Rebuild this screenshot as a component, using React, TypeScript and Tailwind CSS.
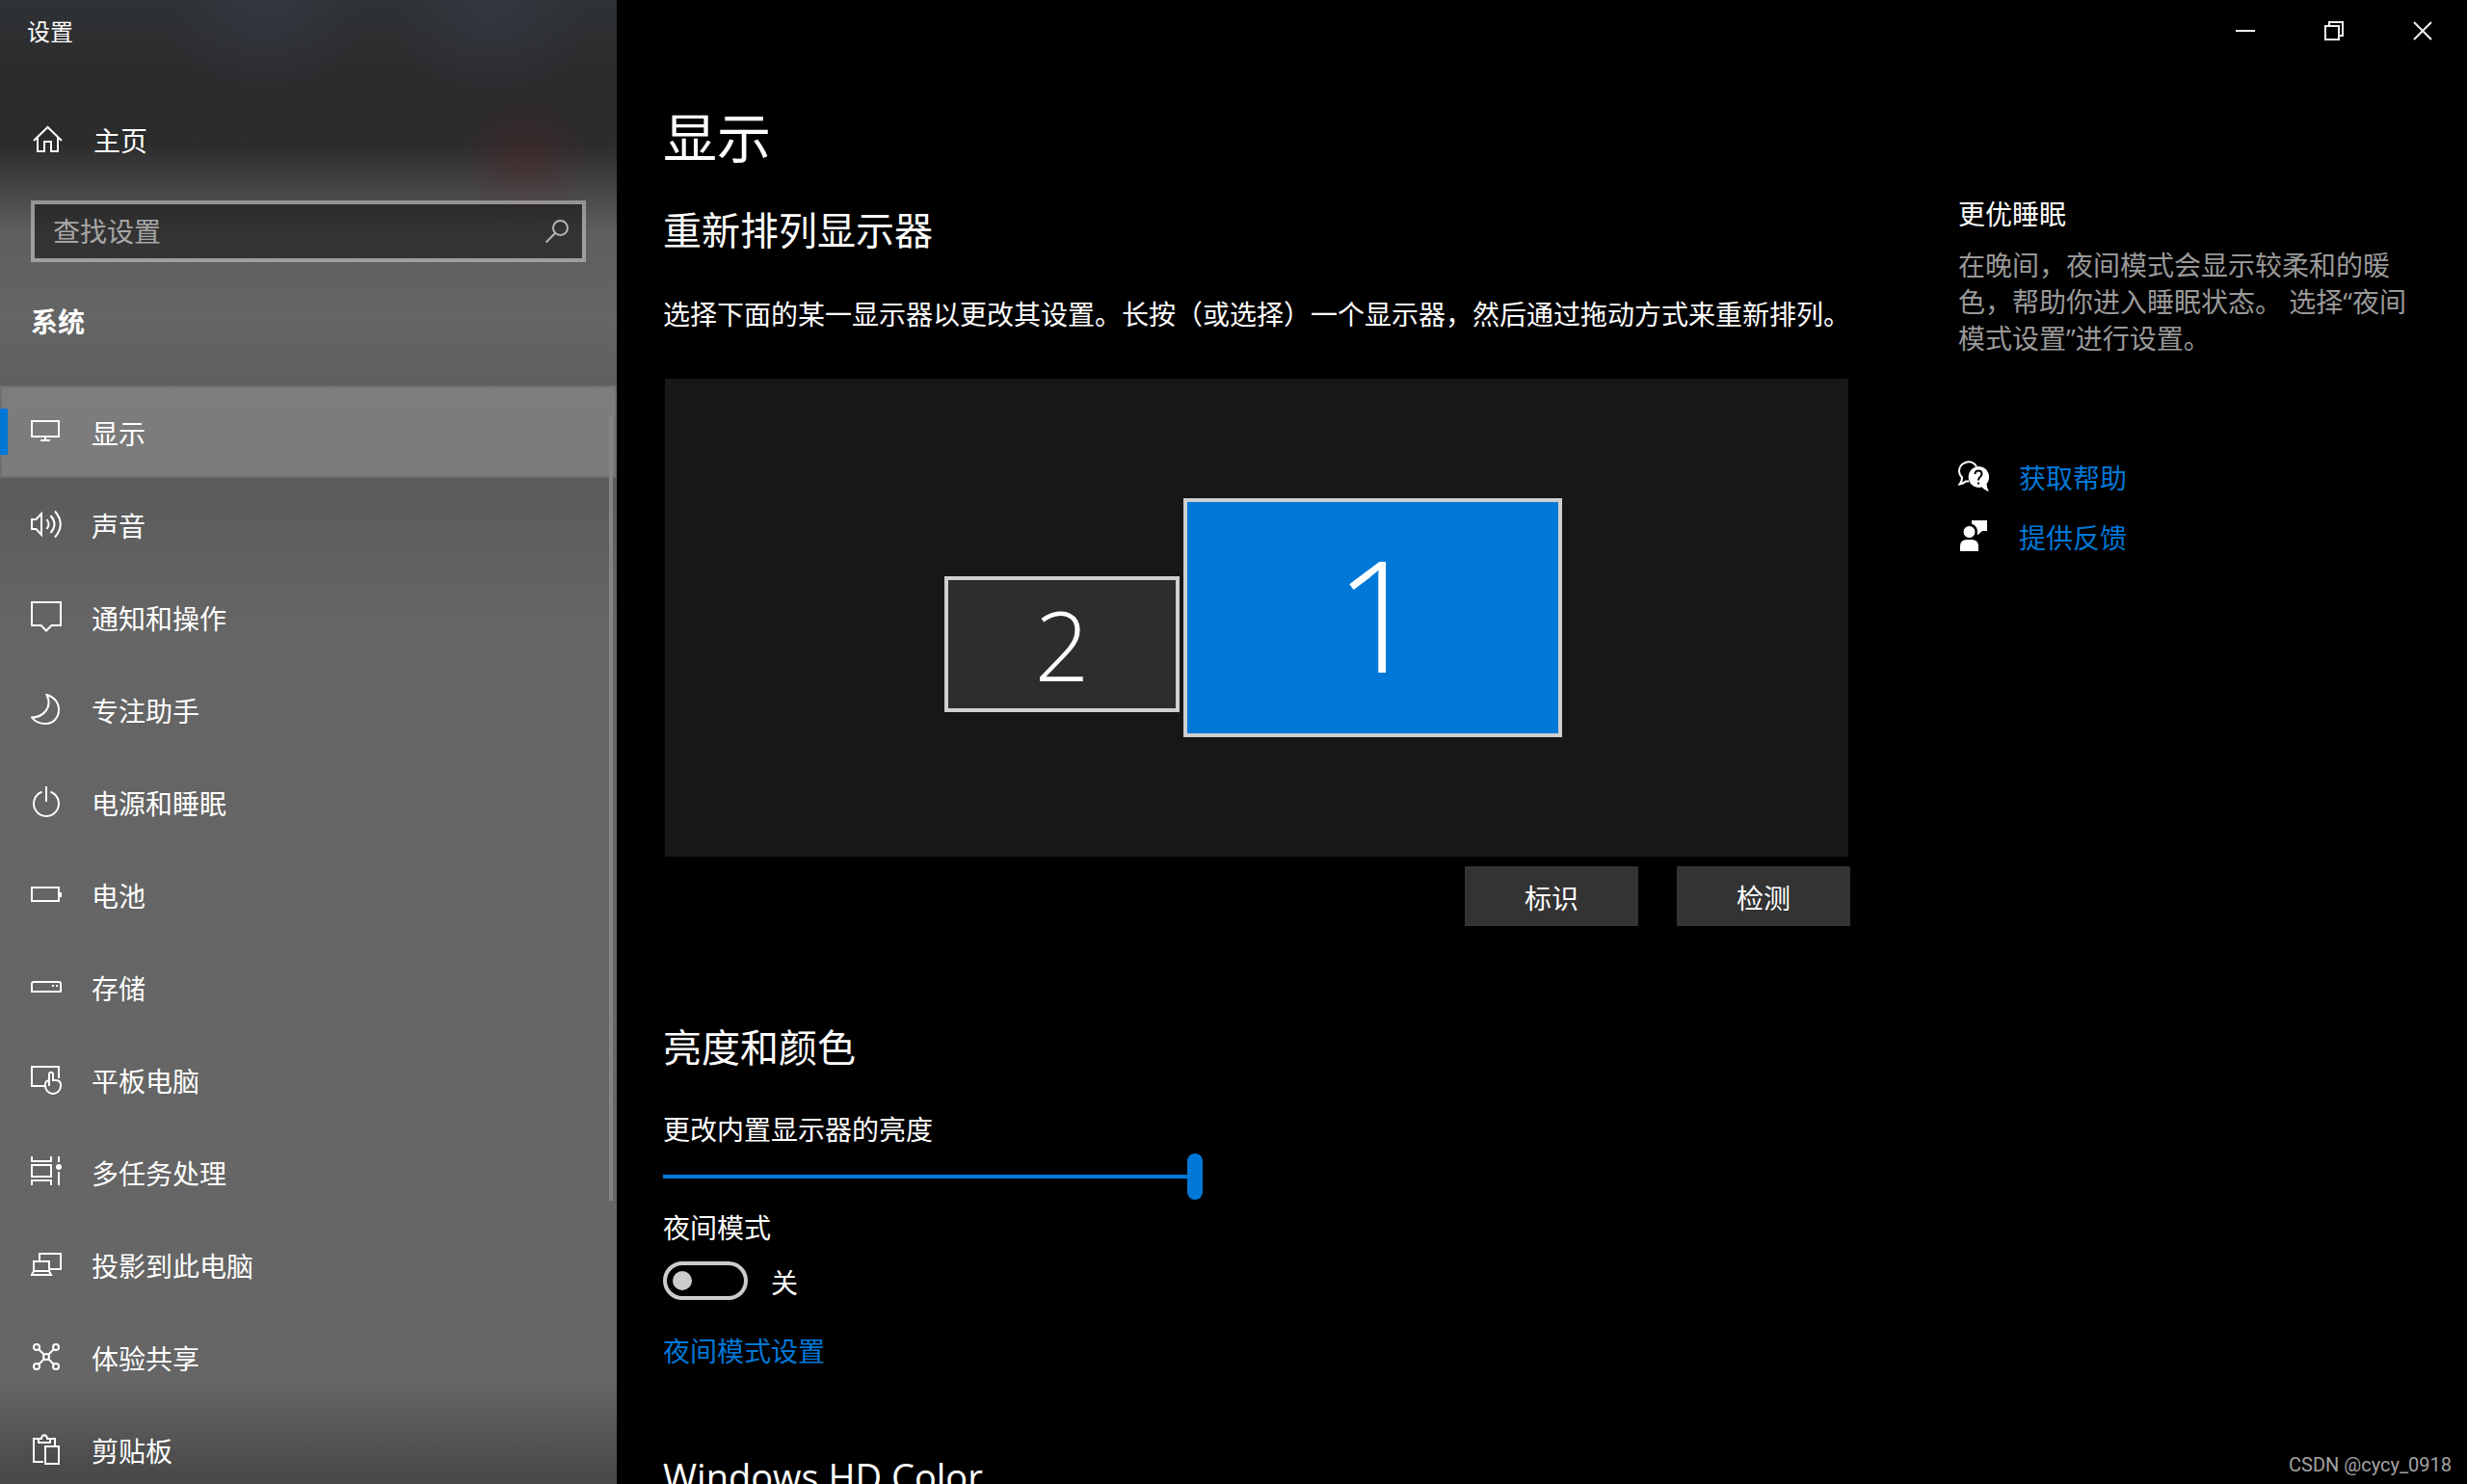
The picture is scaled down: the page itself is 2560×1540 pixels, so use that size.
import { useState } from "react";
import type { ReactNode } from "react";

type NavItem = {
  label: string;
  icon: ReactNode;
};

const NAV_ITEMS: NavItem[] = [
  {
    label: "显示",
    icon: (
      <>
        <rect x="1" y="5" width="28" height="16" />
        <path d="M15 22v3M10 25h10" />
      </>
    ),
  },
  {
    label: "声音",
    icon: (
      <>
        <path d="M1 11h4.5L11 5v22l-5.5-6H1z" />
        <path d="M16.5 11q4 5 0 10M20.5 7q8 9 0 18M25 2.5q11.5 13.5 0 27" />
      </>
    ),
  },
  {
    label: "通知和操作",
    icon: <path d="M1 1h30v24h-9.5L16 30.500l-5.500-5.500H1z" />,
  },
  {
    label: "专注助手",
    icon: (
      <path d="M16.500 1C24 3 29 9 29 16.500C29 25 23 31 15 31C9 31 4 28.500 1 24.500C12 24.500 23 15 16.500 1z" />
    ),
  },
  {
    label: "电源和睡眠",
    icon: <path d="M16 0v16M11.500 5.800A13 13 0 1 0 20.500 5.800" />,
  },
  {
    label: "电池",
    icon: (
      <>
        <rect x="1" y="9" width="28" height="14" />
        <path d="M31 14v5" />
      </>
    ),
  },
  {
    label: "存储",
    icon: (
      <>
        <path d="M1 21v-8q0-2 2-2h26q2 0 2 2v8z" />
        <path d="M22 15h2M26 15h2" />
      </>
    ),
  },
  {
    label: "平板电脑",
    icon: (
      <>
        <path d="M14 23H1V3h28v12" />
        <path d="M19 23V11c0-3 4-3 4 0v6h3q5 0 5 5v1a8 8 0 0 1-16 0v-2q0-3 4-4" />
      </>
    ),
  },
  {
    label: "多任务处理",
    icon: (
      <>
        <path d="M1 0v5h20V0M1 30v-5h20v5M29 0v6M29 16v14" />
        <rect x="1" y="9" width="20" height="12" />
        <circle cx="29" cy="11" r="3" fill="currentColor" stroke="none" />
      </>
    ),
  },
  {
    label: "投影到此电脑",
    icon: (
      <>
        <path d="M9 12V5h22v16H20" />
        <path d="M3 23V13h16v10M3 23h16l2 4H1z" />
      </>
    ),
  },
  {
    label: "体验共享",
    icon: (
      <>
        <circle cx="6" cy="6" r="3" />
        <circle cx="26" cy="6" r="3" />
        <circle cx="6" cy="26" r="3" />
        <circle cx="26" cy="26" r="3" />
        <circle cx="16" cy="16" r="3" />
        <path d="M8 8l6 6M24 8l-6 6M8 24l6-6M24 24l-6-6" />
      </>
    ),
  },
  {
    label: "剪贴板",
    icon: (
      <>
        <path d="M13 29H3V5h5M20 5h5v7" />
        <path d="M8 5v4h12V5h-3c-.5-5-5.500-5-6 0z" />
        <rect x="15" y="13" width="14" height="18" />
      </>
    ),
  },
];

function Icon({ children }: { children: ReactNode }) {
  return (
    <svg
      viewBox="0 0 32 32"
      className="size-8 shrink-0"
      fill="none"
      stroke="currentColor"
      strokeWidth="2"
      aria-hidden="true"
    >
      {children}
    </svg>
  );
}

function Sidebar() {
  const [active, setActive] = useState("显示");

  return (
    <aside className="flex w-[640px] shrink-0 flex-col overflow-hidden bg-[radial-gradient(circle_at_545px_165px,rgba(90,30,35,0.3),transparent_70px),radial-gradient(circle_at_275px_10px,rgba(60,65,85,0.35),transparent_100px),radial-gradient(circle_at_510px_15px,rgba(60,65,85,0.35),transparent_100px),linear-gradient(to_bottom,#2f3235_0px,#2a2a2b_90px,#2c2c2c_150px,#484848_200px,#5e5e5e_240px,#656565_330px,#5f5f5f_400px,#5c5c5c_520px,#656565_640px,#666666_1430px,#494949_1530px)]">
      <div className="flex h-16 shrink-0 items-center px-7 pt-0.5 text-2xl">设置</div>

      <a
        href="#home"
        className="mt-[42px] flex h-20 shrink-0 items-center gap-[31px] pl-[34px]"
      >
        <Icon>
          <path d="M1 16L15.500 2L30 16M5 13v14h7V17h7v10h7V13" />
        </Icon>
        主页
      </a>

      <label className="mx-8 mt-[22px] flex h-16 shrink-0 items-center border-4 border-white/40 bg-black/45 bg-clip-padding pr-3.5 pl-[19px]">
        <input
          type="search"
          aria-label="查找设置"
          placeholder="查找设置"
          className="min-w-0 flex-1 bg-transparent outline-none placeholder:text-[#a6a6a6]"
        />
        <svg
          viewBox="0 0 24 24"
          className="size-6 text-[#b4b4b4]"
          fill="none"
          stroke="currentColor"
          strokeWidth="2"
          aria-hidden="true"
        >
          <circle cx="15.500" cy="8.500" r="7.500" />
          <path d="M10 14L.7 23.500" />
        </svg>
      </label>

      <h2 className="mt-[42px] px-8 leading-10 font-bold">系统</h2>

      <nav className="relative mt-[46px]">
        {NAV_ITEMS.map((item) => (
          <button
            key={item.label}
            type="button"
            onClick={() => setActive(item.label)}
            className={
              item.label === active
                ? "relative flex h-24 w-full items-center gap-[31px] bg-white/19 pl-8 shadow-[inset_0_0_0_2px_rgba(0,0,0,0.1)] before:absolute before:left-0 before:h-12 before:w-2 before:bg-[#0078d7]"
                : "flex h-24 w-full items-center gap-[31px] pl-8"
            }
          >
            <Icon>{item.icon}</Icon>
            <span className="pt-1">{item.label}</span>
          </button>
        ))}
        {/* scroll indicator */}
        <div className="absolute top-8 right-1 h-[814px] w-1 bg-[#858585]" />
      </nav>
    </aside>
  );
}

function WindowControls() {
  return (
    <div className="flex h-16 shrink-0 justify-end text-[#f0f0f0]">
      <button type="button" aria-label="最小化" className="grid w-[92px] place-items-center">
        <svg viewBox="0 0 20 20" className="size-5" stroke="currentColor" strokeWidth="2">
          <path d="M0 10h20" />
        </svg>
      </button>
      <button type="button" aria-label="还原" className="grid w-[92px] place-items-center">
        <svg viewBox="0 0 20 20" className="size-5" fill="none" stroke="currentColor" strokeWidth="2">
          <rect x="1" y="5" width="14" height="14" />
          <path d="M5 5V1h14v14h-4" />
        </svg>
      </button>
      <button type="button" aria-label="关闭" className="grid w-[92px] place-items-center">
        <svg viewBox="0 0 20 20" className="size-5" stroke="currentColor" strokeWidth="2">
          <path d="M1 1l18 18M19 1L1 19" />
        </svg>
      </button>
    </div>
  );
}

function DisplayArrangement() {
  return (
    <>
      <div className="relative mx-0.5 mt-[47px] h-[496px] bg-[#171717]">
        <button
          type="button"
          className="absolute top-[205px] left-[290px] flex h-[141px] w-[244px] items-center justify-center border-4 border-[#cfcfcf] bg-[#2d2d2d] pb-0.5 text-[100px] font-light"
        >
          2
        </button>
        <button
          type="button"
          className="absolute top-[124px] left-[538px] flex h-[248px] w-[393px] items-center justify-center border-4 border-[#cfcfcf] bg-[#0078d7] pb-2.5 pl-3 text-[160px] font-light"
        >
          1
        </button>
      </div>
      <div className="mt-2.5 flex justify-end gap-10">
        <button type="button" className="h-[62px] w-[180px] bg-[#333333] pt-1">
          标识
        </button>
        <button type="button" className="h-[62px] w-[180px] bg-[#333333] pt-1">
          检测
        </button>
      </div>
    </>
  );
}

function BrightnessSection() {
  const [brightness, setBrightness] = useState(100);
  const [nightLight, setNightLight] = useState(false);

  return (
    <section className="mt-[102px]">
      <h2 className="text-[40px] leading-12">亮度和颜色</h2>

      <label htmlFor="brightness" className="mt-[41px] block leading-10">
        更改内置显示器的亮度
      </label>
      <input
        id="brightness"
        type="range"
        value={brightness}
        onChange={(e) => setBrightness(Number(e.target.value))}
        className="mt-[5px] block h-12 w-[560px] appearance-none bg-transparent [&::-webkit-slider-runnable-track]:h-1 [&::-webkit-slider-runnable-track]:bg-[#0078d7] [&::-webkit-slider-thumb]:-mt-[22px] [&::-webkit-slider-thumb]:h-12 [&::-webkit-slider-thumb]:w-4 [&::-webkit-slider-thumb]:appearance-none [&::-webkit-slider-thumb]:rounded-full [&::-webkit-slider-thumb]:bg-[#0078d7]"
      />

      <label htmlFor="night-light" className="mt-[9px] block leading-10">
        夜间模式
      </label>
      <div className="mt-[15px] flex h-10 items-center gap-6">
        <input
          id="night-light"
          type="checkbox"
          role="switch"
          checked={nightLight}
          onChange={(e) => setNightLight(e.target.checked)}
          className="flex h-10 w-[88px] appearance-none items-center rounded-full border-4 border-[#cccccc] px-1.5 before:size-5 before:rounded-full before:bg-[#cccccc] checked:justify-end checked:border-[#0078d7] checked:bg-[#0078d7]"
        />
        <span className="pt-1">{nightLight ? "开" : "关"}</span>
      </div>

      <a href="#night-light-settings" className="mt-[33px] block leading-10 text-[#0078d7]">
        夜间模式设置
      </a>
    </section>
  );
}

function HelpPanel() {
  return (
    <aside className="mt-[138px] w-[472px] shrink-0">
      <h3 className="leading-10">更优睡眠</h3>
      <p className="mt-3.5 leading-[38px] text-[#999999]">
        在晚间，夜间模式会显示较柔和的暖色，帮助你进入睡眠状态。 选择“夜间模式设置”进行设置。
      </p>

      <div className="mt-[104px] flex flex-col gap-[22px] text-[#0078d7]">
        <a href="#help" className="flex h-10 items-center gap-[31px]">
          <svg viewBox="0 0 32 32" className="size-8" aria-hidden="true">
            <path
              d="M19 6A9.700 9.700 0 0 0 1 11Q1 14.500 4 17.500Q4 22 1.500 24.500Q6 23.500 8 21.500H11"
              fill="none"
              stroke="white"
              strokeWidth="2"
            />
            <path
              d="M21 6a11 11 0 0 1 8.500 18Q29.500 28.500 32 32Q27 31 24.500 27.600A11 11 0 1 1 21 6z"
              fill="white"
            />
            <path
              d="M17.500 14q0-3.500 3.500-3.500t3.500 3.300q0 1.700-1.700 3T21 20.500M21 22.500v2"
              fill="none"
              stroke="black"
              strokeWidth="2"
            />
          </svg>
          <span className="pt-1">获取帮助</span>
        </a>
        <a href="#feedback" className="flex h-10 items-center gap-[31px]">
          <svg viewBox="0 0 32 32" className="size-8" fill="white" aria-hidden="true">
            <path d="M14 0h16v11h-5l-5 4.500v-4.500Q19.500 5.500 14 3.500z" />
            <circle cx="11.500" cy="12" r="6.500" stroke="black" />
            <path d="M2 32v-5q0-7 7-7h5q7 0 7 7v5z" />
          </svg>
          <span className="pt-1">提供反馈</span>
        </a>
      </div>
    </aside>
  );
}

export default function App() {
  return (
    <div
      lang="zh-CN"
      className="relative flex h-screen overflow-hidden bg-black font-['Open_Sans','Noto_Sans_CJK_SC',sans-serif] text-[28px] text-white"
    >
      <Sidebar />

      <main className="flex min-w-0 flex-1 flex-col">
        <WindowControls />
        <div className="flex gap-28 pr-14 pl-12">
          <div className="min-w-0 flex-1 pt-[42px]">
            <h1 className="text-[56px] leading-[72px]">显示</h1>
            <h2 className="mt-[37px] text-[40px] leading-12">重新排列显示器</h2>
            <p className="mt-[43px] leading-10">
              选择下面的某一显示器以更改其设置。长按（或选择）一个显示器，然后通过拖动方式来重新排列。
            </p>
            <DisplayArrangement />
            <BrightnessSection />
            <h2 className="mt-[86px] text-[38px] leading-12">Windows HD Color</h2>
          </div>
          <HelpPanel />
        </div>
      </main>

      <span className="absolute right-4 bottom-1.5 font-['Roboto',sans-serif] text-xl text-[#a3a3a3]">
        CSDN @cycy_0918
      </span>
    </div>
  );
}
